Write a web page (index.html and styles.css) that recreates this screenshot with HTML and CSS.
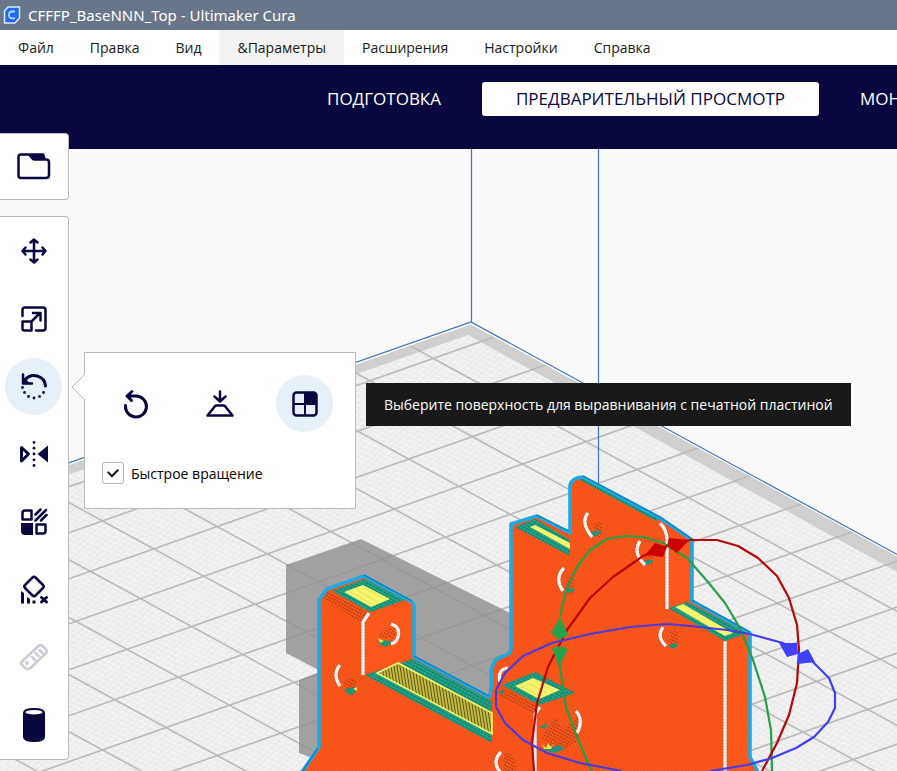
FILE: index.html
```html
<!DOCTYPE html>
<html lang="ru">
<head>
<meta charset="utf-8">
<meta name="viewport" content="width=device-width, initial-scale=1">
<title>CFFFP_BaseNNN_Top - Ultimaker Cura</title>
<link rel="stylesheet" href="styles.css">
</head>
<body>
<div class="titlebar">
  <svg class="logo" viewBox="0 0 18 18" aria-hidden="true">
    <path d="M5 1H16.500V12L12 17H1.500V5Z" fill="#1f6bef" stroke="#dce9fb" stroke-width="1.500" stroke-linejoin="round"/>
    <path d="M12 5.500H9.500Q6 5.500 6 9T9.500 12.300H12" fill="none" stroke="#bcd8ff" stroke-width="1.800"/>
  </svg>
  <span>CFFFP_BaseNNN_Top - Ultimaker Cura</span>
</div>
<nav class="menubar">
  <button>Файл</button>
  <button>Правка</button>
  <button>Вид</button>
  <button class="hovered">&amp;Параметры</button>
  <button>Расширения</button>
  <button>Настройки</button>
  <button>Справка</button>
</nav>
<header class="stages">
  <button class="stage">ПОДГОТОВКА</button>
  <button class="stage active">ПРЕДВАРИТЕЛЬНЫЙ ПРОСМОТР</button>
  <button class="stage">МОНИТОР</button>
</header>
<main class="workspace">
  <svg class="scene" viewBox="0 149 897 622" preserveAspectRatio="xMinYMin slice" role="img" aria-label="3D">
    <defs>
      <pattern id="weave" width="9" height="6" patternUnits="userSpaceOnUse" patternTransform="rotate(-8)">
        <rect width="9" height="6" fill="#ebebeb"/>
        <path d="M1 1.500h4M5.500 4.500h3" stroke="#f5f5f5" stroke-width="2" stroke-linecap="round"/>
      </pattern>
      <pattern id="layers" width="3" height="3" patternUnits="userSpaceOnUse" patternTransform="rotate(-28)">
        <rect width="3" height="3" fill="#fd571a"/>
        <rect width="1" height="3" fill="#ee4e18"/>
      </pattern>
      <pattern id="ribs" width="3" height="8" patternUnits="userSpaceOnUse" patternTransform="skewX(9)">
        <rect width="3" height="8" fill="#c6bd3c"/>
        <rect width="1" height="8" fill="#55531f"/>
      </pattern>
      <pattern id="rows" width="4" height="3" patternUnits="userSpaceOnUse" patternTransform="rotate(28)">
        <rect width="4" height="3" fill="#1fa287"/>
        <rect width="3" height="1" fill="#167562"/>
      </pattern>
      <pattern id="dots" width="3" height="3" patternUnits="userSpaceOnUse" patternTransform="rotate(28)">
        <rect width="2" height="1" fill="#9c3e1a"/>
      </pattern>
      <clipPath id="plate"><path d="M471 322L910 562V800H-10V491Z"/></clipPath>
    </defs>
    <rect y="149" width="897" height="622" fill="#fafafa"/>
    <g clip-path="url(#plate)">
      <rect y="300" width="897" height="480" fill="#cfcfcf"/>
      <path d="M468 335L910 579V800H-10V502Z" fill="url(#weave)"/>
      <path fill="none" stroke="#bababa" stroke-width="1.600" d="M0 122l900 491M0 179l900 491M0 236l900 491M0 294l900 491M0 351l900 491M0 408l900 491M0 465l900 491M0 522l900 491M0 580l900 491M0 637l900 491M0 694l900 491M0 751l900 491M0 511l900-317M0 557l900-317M0 603l900-317M0 648l900-317M0 694l900-317M0 740l900-317M0 786l900-317M0 832l900-317M0 877l900-317M0 923l900-317M0 969l900-317M0 1015l900-317M0 1060l900-317"/>
    </g>
    <path d="M0 488.500L471 323.500L900 557" fill="none" stroke="#fff" stroke-width="1.500"/>
    <path d="M0 487L471 322L900 556M471.500 149V322M598.500 149V500" fill="none" stroke="#3f74bd" stroke-width="1.200"/>
    <path d="M286 565L361 539L520 618V700L440 720L330 676L286 653ZM299 680L330 668V765L299 753Z" fill="#909090" fill-opacity=".82"/>

    <path d="M302 772L319 747V600L327 589L364 576L412 602L414 606V657L489 697Q492 692 491 672Q492 660 501 657Q512 655 512 648V524L537 516L570 533V486Q571 478 583 477L660 518L692 540V601L750 633V757L758 772Z" fill="url(#layers)"/>
    <path d="M371 612L412 601V658L365 674L362 622ZM667 540L690 541V601L668 608ZM728 641L749 634V771H729Z" fill="#ff5b1c" opacity=".65"/>
    <path d="M327 592L368 612L362 622L324 600ZM502 686L538 705L535 714L500 697Z" fill="url(#dots)"/>

    <g fill="url(#rows)">
      <path d="M332 591L365 579L405 600L370 612Z"/>
      <path d="M365 675L413 659L492 701V743Z"/>
      <path d="M515 527L535 519L570 540V556Z"/>
      <path d="M668 608L687 602L747 633L725 641Z"/>
      <path d="M502 685L535 672L575 693L539 705Z"/>
      <path d="M582 478L660 519L656 521L580 480Z"/>
    </g>
    <path d="M344 592L363 585L390 599L371 607ZM530 527L535 525L570 543V549ZM675 607L683 604L733 633L725 636ZM515 686L533 678L560 690L539 699Z" fill="#f7f56b"/>
    <path d="M349 591l22 13M356 589l22 13M363 587l20 11M521 686l18 10M528 683l19 10M535 681l18 9" stroke="#e4df5a" fill="none"/>
    <path d="M377 673L398 663L492 713V734Z" fill="url(#ribs)" stroke="#f7f56b" stroke-width="1.600"/>

    <g fill="url(#dots)">
      <path d="M379 634q8-8 16-6v10h-16ZM344 683q8-10 12-2v14h-6Z"/>
      <path d="M594 524q7-5 8 1v12h-8ZM646 552q8-4 7 3v10h-9ZM567 577q7 0 7 8v10h-9ZM670 632q8-5 8 4v10h-8Z"/>
      <path d="M541 737l14-20 10 16-10 18ZM504 753q10-2 12 14v5h-12ZM555 738l24-22v24l-18 12Z"/>
    </g>
    <g fill="#20957a">
      <path d="M378 640l14 1-5 6q-7 0-9-7ZM344 689l13-2q-1 8-8 8Z"/>
      <path d="M591 532l10-2q0 5-8 7ZM645 560l8 0q-2 6-7 4ZM565 588l10 1q-2 5-9 3ZM668 645l10-2q-1 7-7 5Z"/>
      <path d="M543 750l17-5 4 4-9 4ZM539 727l9-4-3 6ZM497 693l7-4v5Z"/>
    </g>
    <path d="M378 638l6 3-4 2ZM353 689l4-2v4ZM542 744l4 4 2-5 3 4 3-4-3 6h-7Z" fill="#ece64d"/>

    <defs>
      <g id="seams">
        <path d="M369 613L363 622V675M660 523Q667 530 667 540V609M725 641V771M540 707L535 714V771"/>
        <path d="M391 624Q401 627 398 637Q396 643 391 644M340 665Q332 674 340 686M588 513Q580 522 592 537M640 541Q632 553 645 565M564 568Q554 578 563 591M663 627Q656 637 666 646M508 668Q497 669 500 682M576 711Q584 720 577 733M501 752Q491 762 501 773"/>
      </g>
    </defs>
    <use href="#seams" fill="none" stroke="#8a5a4c" stroke-width="4.500" stroke-dasharray="1 2"/>
    <use href="#seams" fill="none" stroke="#fafafa" stroke-width="3.200"/>
    <use href="#seams" fill="none" stroke="#cfcfcf" stroke-width="1.200" stroke-dasharray="1 2"/>

    <path d="M302 772L319 747V600L327 589L364 576L412 602L414 606V657L489 697Q492 692 491 672Q492 660 501 657Q511 655 511 648V524L537 516L570 533V486Q571 478 583 477L660 518L692 540V601L750 633V757L758 772" fill="none" stroke="#1baae4" stroke-width="3.600" stroke-linejoin="round"/>
    <path d="M364 575L412 601M414 656L489 696M537 515L569 531M583 476L660 517L692 539M692 600L750 632M302 772L318 748" fill="none" stroke="#117bbd" stroke-width="1.200"/>

    <g fill="none" stroke-width="2.200" stroke-linejoin="round">
      <path stroke="#259f48" d="M560 617L566 590L577 567L590 550L607 539L625 536L643 537L663 543L687 558L708 582L725 603L740 628L753 660L765 697L771 730L772 771M559 660L566 707L577 737L588 763L592 771"/>
      <path stroke="#b90606" d="M762 771L777 743L789 715L797 683L799 650L797 625L789 598L777 576L758 558L738 546L717 540H690L667 546L643 556L613 577L590 598L567 630L548 667L537 703L532 743L534 771"/>
      <path stroke="#4a3bdc" d="M622 771L580 763L547 753L523 740L505 723L496 707V690L505 673L523 656L552 643L590 634L630 627L667 624L690 626L727 630L750 634"/>
      <path stroke="#4040f2" d="M750 634L783 643L813 662L829 678L835 693V708L828 722L814 737L796 748L772 758L747 765L710 771"/>
    </g>
    <path d="M560 617L568 635L559 640L551 633ZM552 648L560 646L568 649L559 667Z" fill="#27a34b"/>
    <path d="M645 555L655 543L667 547L663 557ZM667 546L669 538L689 540L677 553Z" fill="#cc0000"/>
    <path d="M779 643L797 643L798 654L787 657ZM798 654L808 649L815 662L798 664Z" fill="#4040ff"/>
  </svg>

  <div class="rail">
    <div class="card">
      <button class="tool" aria-label="Открыть">
        <svg viewBox="0 1 34 34"><path d="M4 5.500H11Q12.500 5.500 13.500 7L15 9Q16 10.500 17.500 10.500H29Q32 10.500 32 13.500V26Q32 29 29 29H4Q1.500 29 1.500 26.500V8Q1.500 5.500 4 5.500Z" class="line"/><path d="M12 4.300H26Q28 4.500 28.500 10H17Z" class="solid"/></svg>
      </button>
    </div>
    <div class="card tools">
      <button class="tool" aria-label="Перемещение">
        <svg viewBox="0 0 34 34"><path d="M17 6V28M6 17H28M13.500 8.500L17 5.500L20.500 8.500M13.500 25.500L17 28.500L20.500 25.500M8.500 13.500L5.500 17L8.500 20.500M25.500 13.500L28.500 17L25.500 20.500" class="line"/></svg>
      </button>
      <button class="tool" aria-label="Масштаб">
        <svg viewBox="0 0 34 34"><path d="M5.500 14V8Q5.500 5.500 8 5.500H26Q28.500 5.500 28.500 8V26Q28.500 28.500 26 28.500H19M5.500 19.500H14.500V28.500H7.500Q5.500 28.500 5.500 26.500ZM14.500 19.500L23 11M16 11H23.500V18.500" class="line"/></svg>
      </button>
      <button class="tool current" aria-label="Вращение" aria-expanded="true">
        <span class="disc"><svg viewBox="0 0 34 34"><path d="M28.500 17A11.500 11.500 0 0 0 8 11" class="line thick"/><path d="M6 5.500V14.500H15" class="line"/><path d="M5.500 7l8 8h-8Z" class="solid"/><g class="solid"><circle cx="5.500" cy="18.500" r="1.400"/><circle cx="7.500" cy="23.500" r="1.400"/><circle cx="11.500" cy="27.500" r="1.400"/><circle cx="17" cy="29" r="1.400"/><circle cx="22.500" cy="27.500" r="1.400"/><circle cx="26.500" cy="23.500" r="1.400"/></g></svg></span>
      </button>
      <button class="tool" aria-label="Зеркало">
        <svg viewBox="0 0 34 34"><path d="M4.500 10.500L11.500 17L4.500 24Z" class="line thick"/><path d="M31 8.500V25.500L20.500 17Z" class="solid"/><g class="solid"><circle cx="17" cy="5.500" r="1.400"/><circle cx="17" cy="11.200" r="1.400"/><circle cx="17" cy="17" r="1.400"/><circle cx="17" cy="22.800" r="1.400"/><circle cx="17" cy="28.500" r="1.400"/></g></svg>
      </button>
      <button class="tool" aria-label="Параметры модели">
        <svg viewBox="0 0 34 34"><path d="M8 5.500H14.500V14.500H5.500V8Q5.500 5.500 8 5.500ZM19.500 19.500H28.500V26Q28.500 28.500 26 28.500H19.500Z" class="line"/><path d="M4 18H16V30H8Q4 30 4 26Z" class="solid"/><path d="M18.500 9.500L23.500 4.500M18.500 15.500L29 5M24 15.500L29.500 10" class="line"/></svg>
      </button>
      <button class="tool" aria-label="Блокировка поддержки">
        <svg viewBox="0 0 34 34"><path d="M15.500 4.500Q17 3 18.500 4.500L26 12Q27.500 13.500 26 15L18.500 22.500Q17 24 15.500 22.500L8 15Q6.500 13.500 8 12Z" class="line"/><path d="M4 18l3 2V30.500H4ZM10 24l3 2V30.500H10ZM15.500 27.500h3v3h-3Z" class="solid"/><path d="M24.500 24.500l5 4.500M29.500 24.500l-5 4.500" class="line thick"/></svg>
      </button>
      <button class="tool faded" aria-label="Измерение" disabled>
        <svg viewBox="0 0 34 34"><path d="M5 21.500L21.500 6Q23.500 4 25.500 6L29 9.500Q30.500 11.500 29 13L13 28.500Q11 30 9 28.500L5 25Q3.500 23 5 21.500ZM15 17l3 3M18.500 13l3 3M22.500 10l3 3" class="line"/><circle cx="10" cy="23" r="2" class="solid"/></svg>
      </button>
      <button class="tool" aria-label="Цилиндр">
        <svg viewBox="0 0 34 34"><path d="M6 5Q6 0 17 0T28 5V29Q28 34 17 34T6 29Z" class="solid"/><ellipse cx="17" cy="4.200" rx="8.500" ry="2.300" fill="#fff"/></svg>
      </button>
    </div>
  </div>

  <section class="panel" aria-label="Вращение">
    <svg class="pointer" viewBox="0 0 14 28" aria-hidden="true"><path d="M14 1L1 14L14 27" fill="#fff" stroke="#bcbcbc"/></svg>
    <div class="actions">
      <button class="disc" aria-label="Сброс">
        <svg viewBox="0 0 34 34"><path d="M6.500 18.500A10.500 10.500 0 1 0 17 9H9M13 4.500L8 9L12.500 13.500" class="line thick"/></svg>
      </button>
      <button class="disc" aria-label="Положить плашмя">
        <svg viewBox="0 0 34 34"><path d="M17 4.500V14M11.500 9.500L17 14.500L22.500 9.500M12.500 18.500H21.500L29.500 28.500H4.500Z" class="line"/></svg>
      </button>
      <button class="disc lit" aria-label="Выбрать поверхность">
        <svg viewBox="0 0 34 34"><rect x="5.500" y="5.500" width="23" height="23" rx="3" class="line"/><path d="M17 5.500H27L28.500 7V17H17ZM16 5h2v24h-2ZM5 16h24v2H5Z" class="solid"/></svg>
      </button>
    </div>
    <label class="snap"><input type="checkbox" checked><span>Быстрое вращение</span></label>
  </section>
  <div class="tip" role="tooltip">Выберите поверхность для выравнивания с печатной пластиной</div>
</main>
</body>
</html>
```
FILE: styles.css
```css
* { box-sizing: border-box; }

body {
  margin: 0;
  height: 100vh;
  display: flex;
  flex-direction: column;
  overflow: hidden;
  background: #fafafa;
  color: #191919;
  font-family: "Open Sans", "Noto Sans", sans-serif;
  font-size: 14px;
}

button {
  margin: 0;
  border: 0;
  padding: 0;
  background: none;
  color: inherit;
  font: inherit;
  white-space: nowrap;
}

.titlebar {
  flex: none;
  display: flex;
  align-items: center;
  gap: 7px;
  height: 30px;
  padding-left: 3px;
  background: #687689;
  color: #fff;
  font-family: "Noto Sans", sans-serif;
  font-size: 15px;
}

.logo { width: 18px; height: 18px; }

.menubar {
  flex: none;
  display: flex;
  height: 35px;
  background: #fff;
}

.menubar button { padding: 0 18px; }
.menubar .hovered { background: #f2f2f2; }

.stages {
  flex: none;
  display: flex;
  gap: 7px;
  height: 84px;
  padding: 17px 0 33px 293px;
  overflow: hidden;
  background: #08073f;
  color: #fff;
  font-size: 17px;
}

.stage { padding: 0 34px; border-radius: 3px; line-height: 32px; }
.stage.active { background: #fff; color: #08073f; }

.workspace {
  flex: 1;
  min-height: 0;
  position: relative;
  display: flex;
  align-items: flex-start;
}

.scene {
  position: absolute;
  inset: 0;
  width: 100%;
  height: 100%;
}

.rail {
  position: relative;
  flex: none;
  display: flex;
  flex-direction: column;
  gap: 16px;
  width: 69px;
  margin-top: -16px;
}

.card {
  display: flex;
  flex-direction: column;
  height: 67px;
  border: 1px solid #bcbcbc;
  border-left: 0;
  border-radius: 0 4px 4px 0;
  background: #fff;
}

.card.tools { height: 544px; }

.tool {
  flex: 1;
  display: grid;
  place-items: center;
  padding-right: 1px;
}

.tool svg, .disc svg { width: 34px; height: 34px; display: block; }
.faded { opacity: .2; }

.line {
  fill: none;
  stroke: #08073f;
  stroke-width: 2.5;
  stroke-linecap: round;
  stroke-linejoin: round;
}

.thick { stroke-width: 3; }
.solid { fill: #08073f; }

.disc {
  display: grid;
  place-items: center;
  width: 57px;
  height: 57px;
  border-radius: 50%;
}

.current .disc, .disc.lit { background: #e6f0fb; }

.panel {
  position: relative;
  flex: none;
  width: 272px;
  margin: 203px 0 0 15px;
  padding: 22px 22px 24px;
  border: 1px solid #bcbcbc;
  background: #fff;
}

.pointer {
  position: absolute;
  left: -14px;
  top: 20px;
  width: 14px;
  height: 28px;
}

.actions { display: flex; justify-content: space-between; }

.snap {
  display: flex;
  align-items: center;
  gap: 7px;
  height: 22px;
  margin: 30px 0 0 -5px;
  color: #000;
}

.snap input {
  appearance: none;
  width: 22px;
  height: 22px;
  margin: 0;
  border: 1px solid #b4b4b4;
  border-radius: 3px;
  display: grid;
  place-items: center;
}

.snap input:checked::after {
  content: "";
  width: 8px;
  height: 5px;
  margin-top: -3px;
  border: solid #111;
  border-width: 0 0 2px 2px;
  transform: rotate(-45deg);
}

.tip {
  position: relative;
  flex: none;
  margin: 234px 0 0 10px;
  padding: 0 18px;
  background: #191919;
  color: #fff;
  line-height: 43px;
  white-space: nowrap;
}
```
